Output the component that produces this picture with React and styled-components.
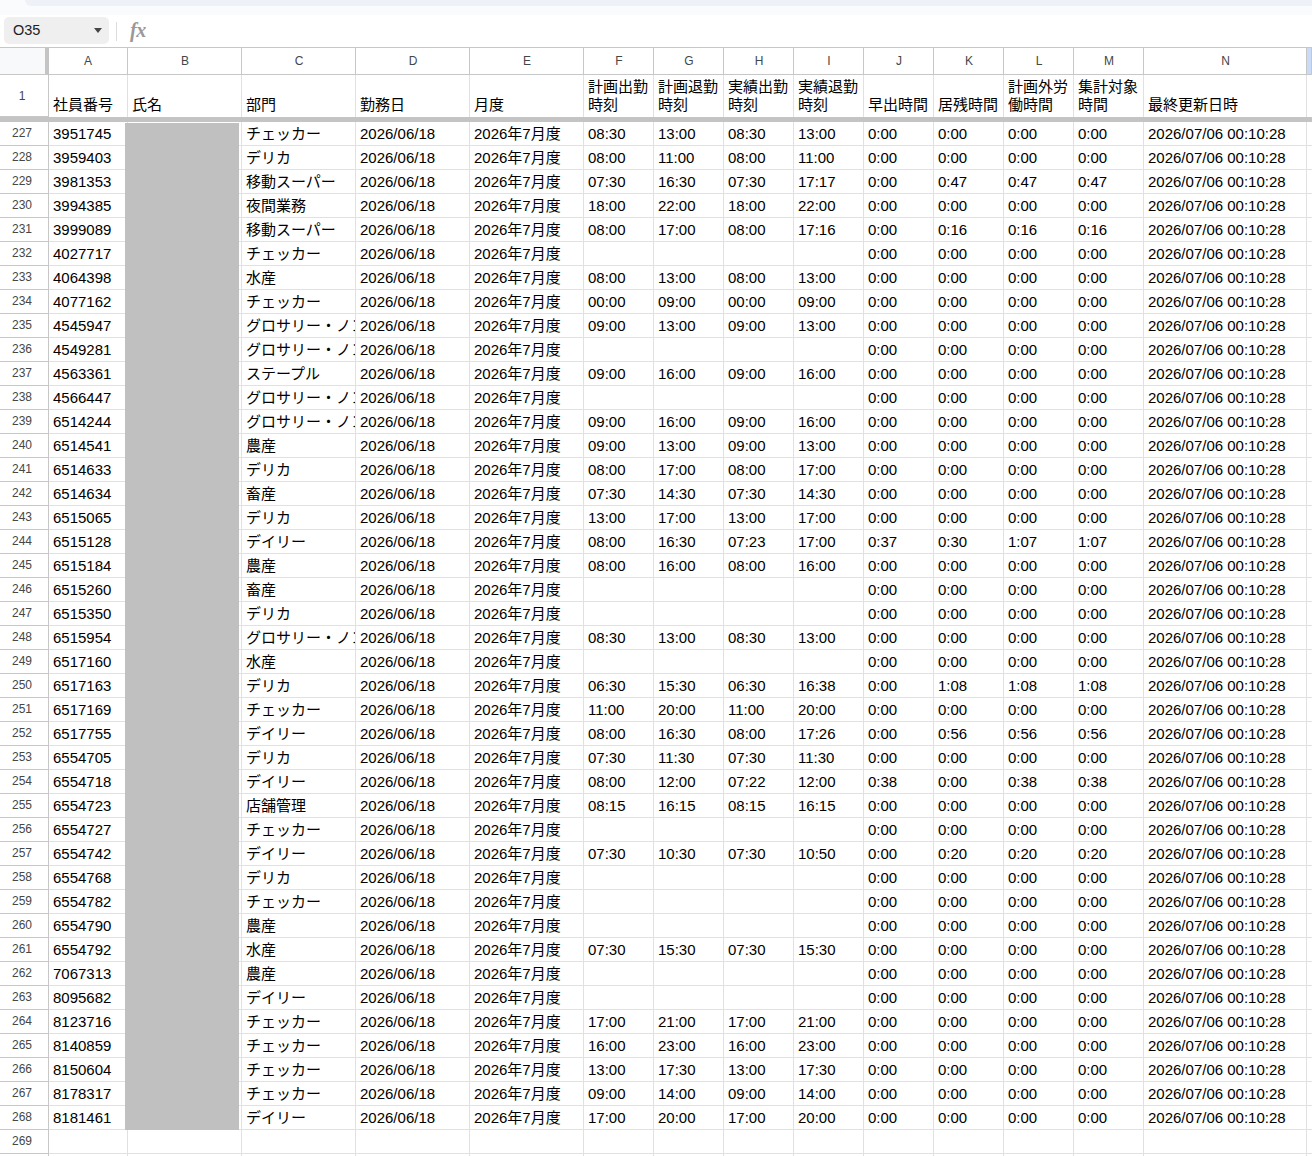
import React from "react";
import styled, { createGlobalStyle } from "styled-components";

const COLS = [
  ["A", 79], ["B", 114], ["C", 114], ["D", 114], ["E", 114], ["F", 70], ["G", 70], ["H", 70],
  ["I", 70], ["J", 70], ["K", 70], ["L", 70], ["M", 70], ["N", 163],
];
const TEMPLATE = `49px ${COLS.map((c) => c[1] + "px").join(" ")} 1fr`;

const HEAD = [
  "社員番号", "氏名", "部門", "勤務日", "月度",
  ["計画出勤", "時刻"], ["計画退勤", "時刻"], ["実績出勤", "時刻"], ["実績退勤", "時刻"],
  "早出時間", "居残時間", ["計画外労", "働時間"], ["集計対象", "時間"], "最終更新日時",
];

const RAW = `227|3951745|チェッカー|08:30|13:00|08:30|13:00|0:00|0:00|0:00|0:00
228|3959403|デリカ|08:00|11:00|08:00|11:00|0:00|0:00|0:00|0:00
229|3981353|移動スーパー|07:30|16:30|07:30|17:17|0:00|0:47|0:47|0:47
230|3994385|夜間業務|18:00|22:00|18:00|22:00|0:00|0:00|0:00|0:00
231|3999089|移動スーパー|08:00|17:00|08:00|17:16|0:00|0:16|0:16|0:16
232|4027717|チェッカー|||||0:00|0:00|0:00|0:00
233|4064398|水産|08:00|13:00|08:00|13:00|0:00|0:00|0:00|0:00
234|4077162|チェッカー|00:00|09:00|00:00|09:00|0:00|0:00|0:00|0:00
235|4545947|グロサリー・ノンフード|09:00|13:00|09:00|13:00|0:00|0:00|0:00|0:00
236|4549281|グロサリー・ノンフード|||||0:00|0:00|0:00|0:00
237|4563361|ステープル|09:00|16:00|09:00|16:00|0:00|0:00|0:00|0:00
238|4566447|グロサリー・ノンフード|||||0:00|0:00|0:00|0:00
239|6514244|グロサリー・ノンフード|09:00|16:00|09:00|16:00|0:00|0:00|0:00|0:00
240|6514541|農産|09:00|13:00|09:00|13:00|0:00|0:00|0:00|0:00
241|6514633|デリカ|08:00|17:00|08:00|17:00|0:00|0:00|0:00|0:00
242|6514634|畜産|07:30|14:30|07:30|14:30|0:00|0:00|0:00|0:00
243|6515065|デリカ|13:00|17:00|13:00|17:00|0:00|0:00|0:00|0:00
244|6515128|デイリー|08:00|16:30|07:23|17:00|0:37|0:30|1:07|1:07
245|6515184|農産|08:00|16:00|08:00|16:00|0:00|0:00|0:00|0:00
246|6515260|畜産|||||0:00|0:00|0:00|0:00
247|6515350|デリカ|||||0:00|0:00|0:00|0:00
248|6515954|グロサリー・ノンフード|08:30|13:00|08:30|13:00|0:00|0:00|0:00|0:00
249|6517160|水産|||||0:00|0:00|0:00|0:00
250|6517163|デリカ|06:30|15:30|06:30|16:38|0:00|1:08|1:08|1:08
251|6517169|チェッカー|11:00|20:00|11:00|20:00|0:00|0:00|0:00|0:00
252|6517755|デイリー|08:00|16:30|08:00|17:26|0:00|0:56|0:56|0:56
253|6554705|デリカ|07:30|11:30|07:30|11:30|0:00|0:00|0:00|0:00
254|6554718|デイリー|08:00|12:00|07:22|12:00|0:38|0:00|0:38|0:38
255|6554723|店舗管理|08:15|16:15|08:15|16:15|0:00|0:00|0:00|0:00
256|6554727|チェッカー|||||0:00|0:00|0:00|0:00
257|6554742|デイリー|07:30|10:30|07:30|10:50|0:00|0:20|0:20|0:20
258|6554768|デリカ|||||0:00|0:00|0:00|0:00
259|6554782|チェッカー|||||0:00|0:00|0:00|0:00
260|6554790|農産|||||0:00|0:00|0:00|0:00
261|6554792|水産|07:30|15:30|07:30|15:30|0:00|0:00|0:00|0:00
262|7067313|農産|||||0:00|0:00|0:00|0:00
263|8095682|デイリー|||||0:00|0:00|0:00|0:00
264|8123716|チェッカー|17:00|21:00|17:00|21:00|0:00|0:00|0:00|0:00
265|8140859|チェッカー|16:00|23:00|16:00|23:00|0:00|0:00|0:00|0:00
266|8150604|チェッカー|13:00|17:30|13:00|17:30|0:00|0:00|0:00|0:00
267|8178317|チェッカー|09:00|14:00|09:00|14:00|0:00|0:00|0:00|0:00
268|8181461|デイリー|17:00|20:00|17:00|20:00|0:00|0:00|0:00|0:00`;

const ROWS = RAW.split("\n").map((l) => l.split("|"));

const Global = createGlobalStyle`
  html, body { margin: 0; padding: 0; background: #fff; overflow: hidden; }
  body { font-family: "Liberation Sans", "Noto Sans CJK JP", sans-serif; }
`;
const Page = styled.div`
  width: 1312px; height: 1156px; overflow: hidden; background: #fff;
  display: flex; flex-direction: column;
`;
const TopStrip = styled.div`
  height: 15px; flex: none; background: #f9fbfd;
`;
const TopStripInner = styled.div`
  height: 6px; background: #eef2f8; margin-left: 25px; border-bottom-left-radius: 10px;
`;
const FormulaBar = styled.div`
  height: 32px; flex: none; display: flex; align-items: flex-start; padding: 2px 0 0 4px;
  box-sizing: border-box; background: #fff;
`;
const NameBox = styled.div`
  width: 105px; height: 27px; border-radius: 5px; background: #efefef; display: flex;
  align-items: center; justify-content: space-between; box-sizing: border-box;
  padding: 0 7px 1px 9px; font-size: 14.5px; color: #202124;
`;
const Caret = styled.span`
  width: 0; height: 0; border-left: 4.5px solid transparent; border-right: 4.5px solid transparent;
  border-top: 5px solid #444746;
`;
const Divider = styled.div`
  width: 1px; height: 19px; background: #dadce0; margin: 5px 13px 0 7px;
`;
const Fx = styled.span`
  font-family: "Liberation Serif", serif; font-style: italic; font-weight: 700;
  font-size: 20px; line-height: 27px; color: #999; letter-spacing: -0.5px;
`;
const Grid = styled.div`
  flex: 1; display: flex; flex-direction: column; position: relative; border-top: 1px solid #c7c7c7;
`;
const Row = styled.div`
  display: grid; grid-template-columns: ${TEMPLATE}; height: ${(p) => p.$h}px; flex: none;
`;
const Corner = styled.div`
  background: #f8f9fa; border-right: 4px solid #c4c4c4; border-bottom: 1px solid #c7c7c7;
  box-sizing: border-box;
`;
const ColHead = styled.div`
  display: flex; align-items: center; justify-content: center; padding-left: ${(p) => (p.$first ? 0 : 1)}px;
  box-sizing: border-box;
  font-size: 12px; color: #444746; background: ${(p) => (p.$sel ? "#c9dbf7" : "#fff")};
  border-right: 1px solid #c7c7c7; border-bottom: 1px solid #c7c7c7;
`;
const RowHead = styled.div`
  display: flex; align-items: center; justify-content: center; box-sizing: border-box;
  padding: 0 4px ${(p) => (p.$first ? 0 : 1)}px 0; font-size: 12px; color: #444746; background: #fff;
  border-right: 1px solid #c7c7c7; border-bottom: 1px solid #c7c7c7;
`;
const Cell = styled.div`
  box-sizing: border-box; overflow: hidden; white-space: nowrap; font-size: 15px; color: #000;
  line-height: 18px; padding: 0 4px 2px 4px; display: flex; align-items: flex-end;
  border-right: 1px solid #e1e1e1; border-bottom: 1px solid #e1e1e1;
`;
const HeadCell = styled(Cell)`
  flex-direction: column; justify-content: flex-end; align-items: flex-start;
  padding: 0 4px 3px 4px; border-bottom: none;
`;
const HeadLine = styled.span`
  display: block; height: 18px; line-height: 18px; white-space: nowrap;
`;
const FreezeLine = styled.div`
  height: 5px; flex: none; background: #c4c4c4;
`;
const Redaction = styled.div`
  position: absolute; left: 125px; top: 75px; width: 114px; height: 1007px; background: #c0c0c0; z-index: 2;
`;

export default function App() {
  return (
    <Page>
      <Global />
      <TopStrip><TopStripInner /></TopStrip>
      <FormulaBar>
        <NameBox>O35<Caret /></NameBox>
        <Divider />
        <Fx>fx</Fx>
      </FormulaBar>
      <Grid>
        <Row $h={27}>
          <Corner />
          {COLS.map(([name], i) => <ColHead key={name} $first={i === 0}>{name}</ColHead>)}
          <ColHead $sel />
        </Row>
        <Row $h={42}>
          <RowHead $first>1</RowHead>
          {HEAD.map((h, i) => (
            <HeadCell key={i}>
              {(Array.isArray(h) ? h : [h]).map((t) => <HeadLine key={t}>{t}</HeadLine>)}
            </HeadCell>
          ))}
          <HeadCell />
        </Row>
        <FreezeLine />
        {ROWS.map(([n, id, dept, a, b, c, d, e, f, g, h]) => (
          <Row $h={24} key={n}>
            <RowHead>{n}</RowHead>
            <Cell>{id}</Cell>
            <Cell />
            <Cell>{dept}</Cell>
            <Cell>2026/06/18</Cell>
            <Cell>2026年7月度</Cell>
            {[a, b, c, d, e, f, g, h].map((v, i) => <Cell key={i}>{v}</Cell>)}
            <Cell>2026/07/06 00:10:28</Cell>
            <Cell />
          </Row>
        ))}
        <Row $h={24}>
          <RowHead>269</RowHead>
          {COLS.map(([name]) => <Cell key={name} />)}
          <Cell />
        </Row>
        <Row $h={24}>
          <RowHead />
          {COLS.map(([name]) => <Cell key={name} />)}
          <Cell />
        </Row>
        <Redaction />
      </Grid>
    </Page>
  );
}
